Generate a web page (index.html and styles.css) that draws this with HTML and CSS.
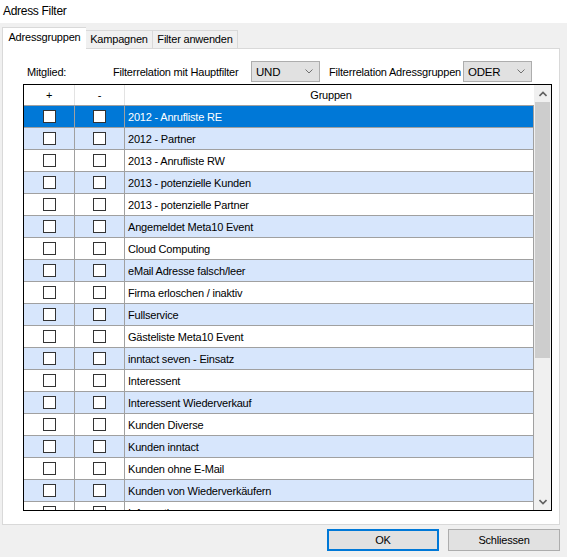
FILE: index.html
```html
<!DOCTYPE html>
<html lang="de">
<head>
    <meta charset="UTF-8">
    <title>Adress Filter</title>
    <link rel="stylesheet" href="styles.css">
</head>
<body>

    <div class="titlebar">Adress Filter</div>

    <!-- Reiter -->
    <div class="tabs">
        <div class="tab active">Adressgruppen</div>
        <div class="tab">Kampagnen</div>
        <div class="tab">Filter anwenden</div>
    </div>

    <div class="panel">
        <div class="filters">
            <span class="lbl lbl-member">Mitglied:</span>
            <span class="lbl lbl-main">Filterrelation mit Hauptfilter</span>
            <div class="combo">UND
                <svg class="chev" width="8" height="5" viewBox="0 0 8 5"><path d="M0.5 0.5 L4 4 L7.5 0.5" fill="none" stroke="#707070" stroke-width="1"/></svg>
            </div>
            <span class="lbl lbl-groups">Filterrelation Adressgruppen</span>
            <div class="combo">ODER
                <svg class="chev" width="8" height="5" viewBox="0 0 8 5"><path d="M0.5 0.5 L4 4 L7.5 0.5" fill="none" stroke="#707070" stroke-width="1"/></svg>
            </div>
        </div>

        <!-- Gruppen-Tabelle -->
        <div class="grid">
            <div class="grid-body" id="grid-body">
                <div class="row head">
                    <div class="cell c-plus">+</div>
                    <div class="cell c-minus">-</div>
                    <div class="cell c-name">Gruppen</div>
                </div>
            </div>
            <div class="scrollbar">
                <div class="sb-btn">
                    <svg width="8" height="6" viewBox="0 0 8 6"><path d="M0.5 5 L4 1.5 L7.5 5" fill="none" stroke="#606060" stroke-width="1.6"/></svg>
                </div>
                <div class="sb-thumb"></div>
                <div class="sb-track"></div>
                <div class="sb-btn">
                    <svg width="8" height="6" viewBox="0 0 8 6"><path d="M0.5 1 L4 4.5 L7.5 1" fill="none" stroke="#606060" stroke-width="1.6"/></svg>
                </div>
            </div>
        </div>
    </div>

    <div class="buttons">
        <button class="btn default">OK</button>
        <button class="btn">Schliessen</button>
    </div>

    <script>
        // Adressgruppen
        const groups = [
            "2012 - Anrufliste RE",
            "2012 - Partner",
            "2013 - Anrufliste RW",
            "2013 - potenzielle Kunden",
            "2013 - potenzielle Partner",
            "Angemeldet Meta10 Event",
            "Cloud Computing",
            "eMail Adresse falsch/leer",
            "Firma erloschen / inaktiv",
            "Fullservice",
            "Gästeliste Meta10 Event",
            "inntact seven - Einsatz",
            "Interessent",
            "Interessent Wiederverkauf",
            "Kunden Diverse",
            "Kunden inntact",
            "Kunden ohne E-Mail",
            "Kunden von Wiederverkäufern",
            "Information"
        ];

        const body = document.getElementById("grid-body");
        groups.forEach((name, i) => {
            const row = document.createElement("div");
            row.className = "row" + (i === 0 ? " selected" : (i % 2 ? " alt" : ""));
            row.innerHTML = `
                <div class="cell c-plus"><span class="check"></span></div>
                <div class="cell c-minus"><span class="check"></span></div>
                <div class="cell c-name">${name}</div>
            `;
            body.appendChild(row);
        });
    </script>

</body>
</html>
```

FILE: styles.css
```css
* {
    box-sizing: border-box;
}
body {
    margin: 0;
    width: 567px;
    height: 557px;
    overflow: hidden;
    background-color: #f0f0f0;
    font-family: "Liberation Sans", Arial, sans-serif;
    font-size: 11px;
    letter-spacing: -0.2px;
    color: #000;
}
.titlebar {
    height: 23px;
    line-height: 22px;
    padding-left: 3px;
    background-color: #fff;
    font-size: 12px;
    letter-spacing: -0.3px;
}
.tabs {
    display: flex;
    align-items: flex-end;
    height: 21px;
    margin-top: 4px;
    padding-left: 2px;
    position: relative;
    z-index: 1;
}
.tab {
    height: 18px;
    line-height: 17px;
    padding: 0;
    border: 1px solid #d9d9d9;
    border-bottom: none;
    background-color: #f0f0f0;
    text-align: center;
    white-space: nowrap;
}
.tab + .tab {
    border-left: none;
}
.tab.active {
    width: 84px;
    height: 22px;
    margin-bottom: -1px;
    line-height: 19px;
    background-color: #fff;
    border-right: none;
}
.tab:nth-child(2) {
    width: 67px;
}
.tab:nth-child(3) {
    width: 85px;
}
.panel {
    width: 558px;
    height: 477px;
    margin-left: 2px;
    padding-top: 12px;
    background-color: #fff;
    border: 1px solid #d9d9d9;
}
.filters {
    display: flex;
    align-items: center;
    height: 21px;
    white-space: nowrap;
}
.lbl {
    display: block;
}
.lbl-member {
    width: 86px;
    margin-left: 24px;
}
.lbl-main {
    width: 138px;
}
.lbl-groups {
    width: 134px;
    margin-left: 9px;
}
.combo {
    display: flex;
    align-items: center;
    justify-content: space-between;
    width: 69px;
    height: 21px;
    padding: 0 6px 0 4px;
    border: 1px solid #adadad;
    background-color: #e1e1e1;
    font-size: 11.5px;
}
.grid {
    display: flex;
    width: 529px;
    height: 427px;
    margin-top: 2px;
    margin-left: 20px;
    border: 1px solid #000;
    background-color: #fff;
    overflow: hidden;
}
.grid-body {
    width: 510px;
    overflow: hidden;
}
.row {
    display: flex;
    height: 22px;
    border-bottom: 1px solid #a0a0a0;
}
.row.head {
    height: 21px;
}
.row.alt {
    background-color: #d7e6fc;
}
.row.selected {
    background-color: #0078d7;
    color: #fff;
}
.cell {
    display: flex;
    align-items: center;
    border-right: 1px solid #a0a0a0;
    white-space: nowrap;
    overflow: hidden;
}
.head .cell {
    justify-content: center;
    border-right-color: #e3e3e3;
}
.head .c-name {
    border-right: none;
}
.c-plus {
    width: 51px;
    justify-content: center;
}
.c-minus {
    width: 50px;
    justify-content: center;
}
.c-name {
    width: 409px;
    padding-left: 3px;
}
.check {
    display: block;
    width: 13px;
    height: 13px;
    border: 1px solid #333;
    background-color: #fff;
}
.scrollbar {
    display: flex;
    flex-direction: column;
    width: 17px;
    background-color: #f0f0f0;
}
.sb-btn {
    display: flex;
    align-items: center;
    justify-content: center;
    height: 17px;
}
.sb-thumb {
    height: 256px;
    margin: 0 1px;
    background-color: #cdcdcd;
}
.sb-track {
    flex: 1;
}
.buttons {
    display: flex;
    justify-content: flex-end;
    gap: 9px;
    margin-top: 4px;
    padding-right: 7px;
}
.btn {
    width: 112px;
    height: 22px;
    padding: 0;
    border: 1px solid #adadad;
    background-color: #e1e1e1;
    font-family: "Liberation Sans", Arial, sans-serif;
    font-size: 11px;
    letter-spacing: -0.2px;
    color: #000;
}
.btn.default {
    border: 2px solid #0078d7;
}
```
